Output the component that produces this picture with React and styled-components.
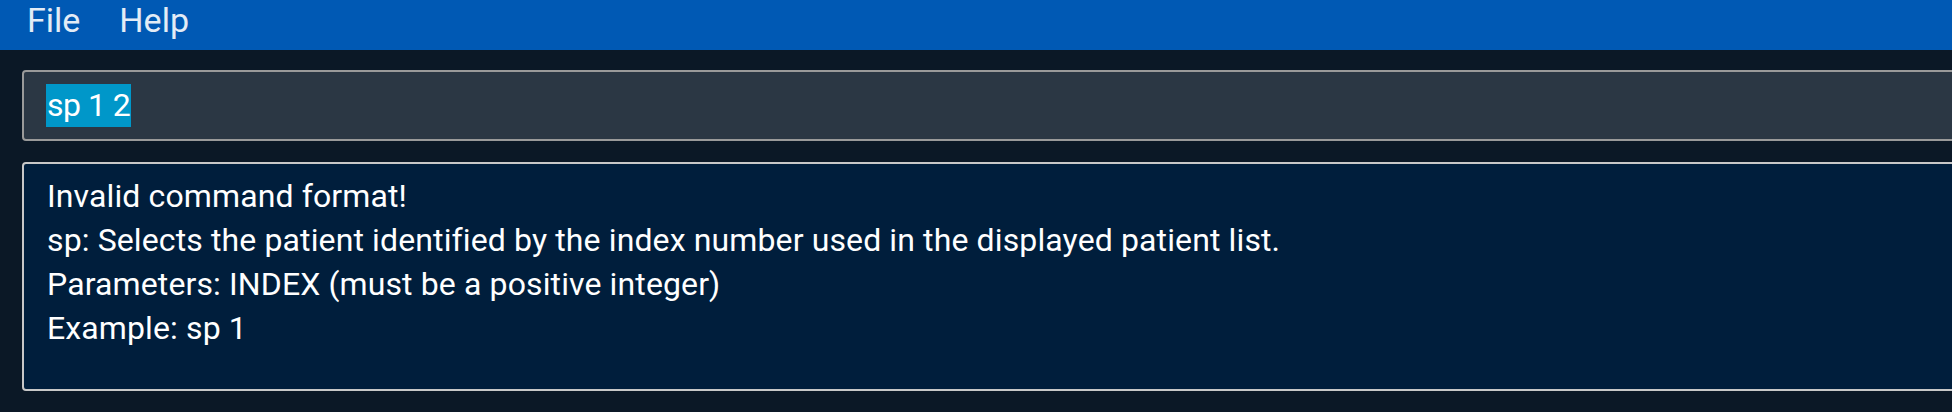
import React from "react";
import styled, { createGlobalStyle } from "styled-components";

const Global = createGlobalStyle`
  html, body { margin: 0; padding: 0; background: #0b1826; overflow: hidden; }
  body { font-family: Roboto, "Noto Sans", sans-serif; }
`;

const Page = styled.div`
  width: 1952px;
  height: 412px;
  background: #0b1826;
  display: flex;
  flex-direction: column;
  overflow: hidden;
`;

const MenuBar = styled.div`
  height: 50px;
  background: #0059b4;
  display: flex;
  align-items: center;
  gap: 39px;
  padding-left: 27px;
`;

const MenuItem = styled.span`
  color: #e3ecf6;
  font-size: 34px;
  line-height: 1;
  margin-top: -10px;
`;

const Body = styled.div`
  display: flex;
  flex-direction: column;
  gap: 21px;
  padding: 20px 0 0 22px;
`;

const CommandBox = styled.div`
  width: 2100px;
  height: 71px;
  box-sizing: border-box;
  background: #2b3744;
  border: 2px solid #9a9a9a;
  border-radius: 4px;
  display: flex;
  align-items: center;
  padding-left: 22px;
`;

const Selected = styled.span`
  background: #0097c9;
  color: #ffffff;
  font-size: 32px;
  line-height: 43px;
  letter-spacing: -0.5px;
  padding: 0 1px;
`;

const ResultBox = styled.div`
  width: 2100px;
  height: 229px;
  box-sizing: border-box;
  background: #001e3c;
  border: 2px solid #c8c8c8;
  border-radius: 4px;
  padding: 10px 0 0 23px;
`;

const Line = styled.div`
  color: #ffffff;
  font-size: 32px;
  line-height: 44px;
  white-space: nowrap;
  letter-spacing: 0.12px;
`;

const lines = [
  "Invalid command format!",
  "sp: Selects the patient identified by the index number used in the displayed patient list.",
  "Parameters: INDEX (must be a positive integer)",
  "Example: sp 1",
];

export default function App() {
  return (
    <Page>
      <Global />
      <MenuBar>
        <MenuItem>File</MenuItem>
        <MenuItem>Help</MenuItem>
      </MenuBar>
      <Body>
        <CommandBox>
          <Selected>sp 1 2</Selected>
        </CommandBox>
        <ResultBox>
          {lines.map((l) => (
            <Line key={l}>{l}</Line>
          ))}
        </ResultBox>
      </Body>
    </Page>
  );
}
